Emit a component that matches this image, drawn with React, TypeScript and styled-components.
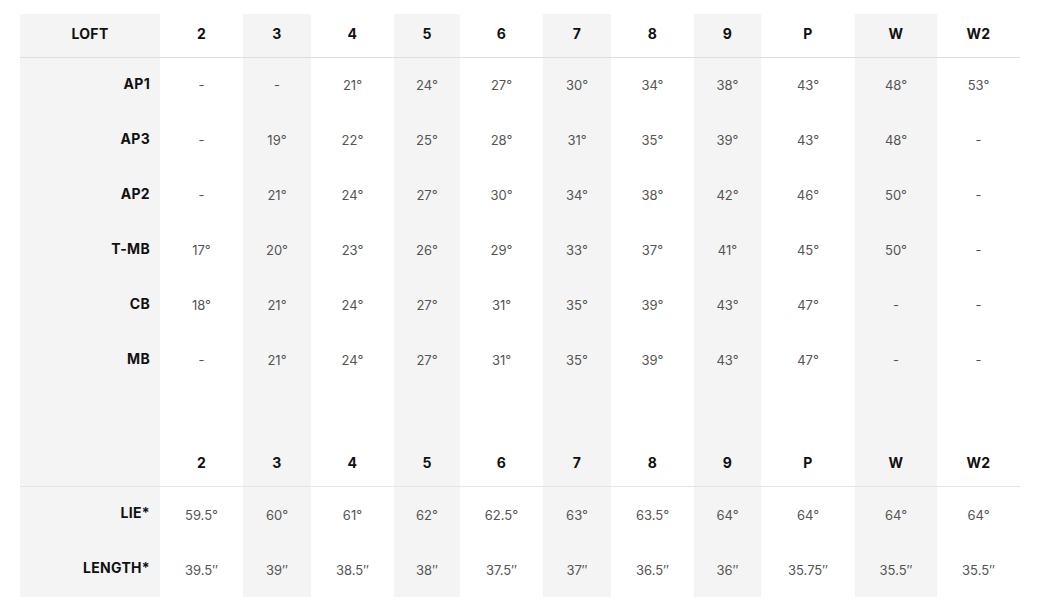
import React from "react";
import styled, { createGlobalStyle } from "styled-components";

const GlobalStyle = createGlobalStyle`
  html, body {
    margin: 0;
    padding: 0;
    background: #ffffff;
    font-family: Inter, "Liberation Sans", sans-serif;
  }
`;

const Page = styled.section`
  padding: 14px 20px 8px 20px;
`;

const Table = styled.table`
  border-collapse: collapse;
  border-spacing: 0;
  table-layout: fixed;
  width: 1000px;
`;

const HeadCell = styled.th<{ $shade?: boolean; $line: string; $height: number; $lift: number }>`
  height: ${(p) => p.$height}px;
  padding: 0 0 ${(p) => p.$lift}px 0;
  box-sizing: border-box;
  text-align: center;
  vertical-align: middle;
  font-size: 14px;
  font-weight: 700;
  color: #111;
  letter-spacing: 0.3px;
  background: ${(p) => (p.$shade ? "#f4f4f4" : "#ffffff")};
  border-bottom: 1px solid ${(p) => p.$line};
`;

const RowLabel = styled.th`
  height: 55px;
  padding: 0 10px 4px 0;
  box-sizing: border-box;
  text-align: right;
  vertical-align: middle;
  font-size: 14px;
  font-weight: 700;
  color: #111;
  letter-spacing: 0.3px;
  background: #f4f4f4;
`;

const Value = styled.td<{ $shade?: boolean }>`
  height: 55px;
  padding: 0;
  text-align: center;
  vertical-align: middle;
  font-size: 13px;
  font-weight: 400;
  color: #555;
  background: ${(p) => (p.$shade ? "#f4f4f4" : "#ffffff")};
`;

const Spacer = styled.td<{ $shade?: boolean }>`
  height: 51px;
  padding: 0;
  background: ${(p) => (p.$shade ? "#f4f4f4" : "#ffffff")};
`;

const widths = [140, 83, 68, 83, 66, 83, 68, 83, 67, 94, 82, 83];
const clubs = ["2", "3", "4", "5", "6", "7", "8", "9", "P", "W", "W2"];
const shaded = (i: number) => i % 2 === 1;

const deg = (v: string) => (v === "-" ? "-" : `${v}°`);
const inch = (v: string) => `${v}″`;

const loft: [string, string[]][] = [
  ["AP1", ["-", "-", "21", "24", "27", "30", "34", "38", "43", "48", "53"]],
  ["AP3", ["-", "19", "22", "25", "28", "31", "35", "39", "43", "48", "-"]],
  ["AP2", ["-", "21", "24", "27", "30", "34", "38", "42", "46", "50", "-"]],
  ["T-MB", ["17", "20", "23", "26", "29", "33", "37", "41", "45", "50", "-"]],
  ["CB", ["18", "21", "24", "27", "31", "35", "39", "43", "47", "-", "-"]],
  ["MB", ["-", "21", "24", "27", "31", "35", "39", "43", "47", "-", "-"]],
];

const lie = ["59.5", "60", "61", "62", "62.5", "63", "63.5", "64", "64", "64", "64"];
const length = ["39.5", "39", "38.5", "38", "37.5", "37", "36.5", "36", "35.75", "35.5", "35.5"];

type HeaderProps = { first: string; line: string; height: number; lift: number };

const HeaderRow = ({ first, line, height, lift }: HeaderProps) => (
  <tr>
    <HeadCell $shade $line={line} $height={height} $lift={lift}>
      {first}
    </HeadCell>
    {clubs.map((c, i) => (
      <HeadCell key={c} $shade={shaded(i)} $line={line} $height={height} $lift={lift}>
        {c}
      </HeadCell>
    ))}
  </tr>
);

const DataRow = ({ label, values }: { label: string; values: string[] }) => (
  <tr>
    <RowLabel>{label}</RowLabel>
    {values.map((v, i) => (
      <Value key={i} $shade={shaded(i)}>
        {v}
      </Value>
    ))}
  </tr>
);

const App = () => {
  return (
    <Page>
      <GlobalStyle />
      <Table>
        <colgroup>
          {widths.map((w, i) => (
            <col key={i} style={{ width: w }} />
          ))}
        </colgroup>
        <tbody>
          <HeaderRow first="LOFT" line="#dedede" height={43} lift={4} />
          {loft.map(([label, values]) => (
            <DataRow key={label} label={label} values={values.map(deg)} />
          ))}
          <tr>
            <Spacer $shade />
            {clubs.map((c, i) => (
              <Spacer key={c} $shade={shaded(i)} />
            ))}
          </tr>
          <HeaderRow first="" line="#ebe2e4" height={48} lift={0} />
          <DataRow label="LIE*" values={lie.map(deg)} />
          <DataRow label="LENGTH*" values={length.map(inch)} />
        </tbody>
      </Table>
    </Page>
  );
};

export default App;
